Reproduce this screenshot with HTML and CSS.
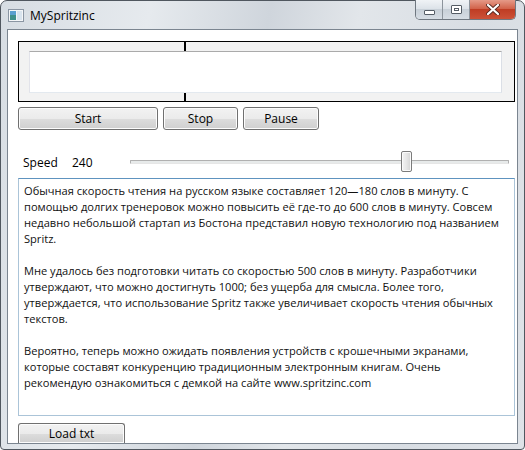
FILE: index.html
```html
<!DOCTYPE html>
<html lang="ru">
<head>
  <meta charset="UTF-8" />
  <title>MySpritzinc</title>
  <link rel="stylesheet" href="styles.css">
</head>
<body>
  <div class="window">
    <!-- Title bar -->
    <div class="titlebar">
      <svg class="app-icon" width="16" height="13" viewBox="0 0 16 13">
        <rect x="0.5" y="0.5" width="15" height="12" fill="#f4f6f8" stroke="#8b96a3"/>
        <rect x="2" y="2" width="6" height="9" fill="#3f8f8a"/>
        <rect x="2" y="2" width="6" height="4" fill="#5a9fd0"/>
        <rect x="9" y="2" width="5" height="9" fill="#d9e4ee"/>
      </svg>
      <span class="title">MySpritzinc</span>
      <div class="caption-buttons">
        <div class="cap-btn cap-min"><span class="min-glyph"></span></div>
        <div class="cap-btn cap-max"><span class="max-glyph"></span></div>
        <div class="cap-btn cap-close">
          <svg width="14" height="11" viewBox="0 0 14 11">
            <path d="M2 1 L12 10 M12 1 L2 10" stroke="#5a2a22" stroke-width="4" stroke-linecap="round"/>
            <path d="M2 1 L12 10 M12 1 L2 10" stroke="#ffffff" stroke-width="2.2" stroke-linecap="round"/>
          </svg>
        </div>
      </div>
    </div>

    <!-- Client area -->
    <div class="client">
      <div class="reader">
        <div class="word-box"></div>
        <span class="mark mark-top"></span>
        <span class="mark mark-bottom"></span>
      </div>

      <div class="controls">
        <button class="btn btn-start">Start</button>
        <button class="btn btn-stop">Stop</button>
        <button class="btn btn-pause">Pause</button>
      </div>

      <div class="speed-row">
        <span class="speed-label">Speed</span>
        <span class="speed-value">240</span>
        <div class="slider">
          <div class="track"></div>
          <div class="thumb" style="left: 71.6%"></div>
        </div>
      </div>

      <div class="text-box">Обычная скорость чтения на русском языке составляет 120—180 слов в минуту. С<br>помощью долгих тренеровок можно повысить её где-то до 600 слов в минуту. Совсем<br>недавно небольшой стартап из Бостона представил новую технологию под названием<br>Spritz.<br><br>Мне удалось без подготовки читать со скоростью 500 слов в минуту. Разработчики<br>утверждают, что можно достигнуть 1000; без ущерба для смысла. Более того,<br>утверждается, что использование Spritz также увеличивает скорость чтения обычных<br>текстов.<br><br>Вероятно, теперь можно ожидать появления устройств с крошечными экранами,<br>которые составят конкуренцию традиционным электронным книгам. Очень<br>рекомендую ознакомиться с демкой на сайте www.spritzinc.com</div>

      <button class="btn btn-load">Load txt</button>
    </div>
  </div>
</body>
</html>
```

FILE: styles.css
```css
* {
  box-sizing: border-box;
}

body {
  margin: 0;
  background-color: #ffffff;
  font-family: "Open Sans", "Noto Sans", sans-serif;
}

.window {
  width: 525px;
  height: 450px;
  border: 1px solid #50575f;
  border-radius: 7px 7px 4px 4px;
  background: linear-gradient(100deg, #d7dde3 0%, #e6eaee 25%, #cfd5dc 45%, #e2e6ea 60%, #d8dde3 80%, #dfe3e8 100%);
  padding: 0 6px;
}

.titlebar {
  height: 28px;
  display: flex;
  align-items: flex-start;
  position: relative;
}

.app-icon {
  margin: 8px 0 0 1px;
}

.title {
  margin: 6px 0 0 6px;
  font-size: 12px;
  color: #000;
}

.caption-buttons {
  position: absolute;
  top: -1px;
  right: 2px;
  display: flex;
  height: 20px;
  border: 1px solid #6f7780;
  border-top: none;
  border-radius: 0 0 5px 5px;
  overflow: hidden;
}

.cap-btn {
  height: 19px;
  display: flex;
  align-items: center;
  justify-content: center;
}

.cap-min,
.cap-max {
  width: 27px;
  background: linear-gradient(#f0f3f6, #dde3e9 45%, #c8d0d8 50%, #d6dde4);
  border-right: 1px solid #8c949c;
}

.cap-close {
  width: 45px;
  background: linear-gradient(#e59a88, #d2634b 45%, #bf3d24 50%, #cc5238);
}

.min-glyph {
  width: 11px;
  height: 5px;
  margin-top: 5px;
  border: 1px solid #555d66;
  background: #fff;
  border-radius: 1px;
}

.max-glyph {
  width: 11px;
  height: 9px;
  border: 1px solid #555d66;
  background: #fff;
  box-shadow: inset 0 0 0 2px #fff, inset 0 0 0 3px #555d66;
  border-radius: 1px;
}

.client {
  height: 415px;
  border: 1px solid #7b8590;
  background: #ffffff;
  padding: 11px 2px 0 10px;
}

.reader {
  position: relative;
  height: 61px;
  border: 1px solid #000;
  background: #f2f2f2;
  padding: 9px 12px 8px 10px;
}

.word-box {
  height: 42px;
  background: #fff;
  border: 1px solid #e3e9ef;
  border-top-color: #aaaaaa;
  border-left-color: #e2e3ea;
  border-right-color: #dbdfe6;
}

.mark {
  position: absolute;
  left: 165px;
  width: 2px;
  height: 9px;
  background: #000;
}

.mark-top {
  top: 0;
}

.mark-bottom {
  bottom: 0;
  height: 8px;
}

.controls {
  display: flex;
  gap: 5px;
  margin-top: 5px;
}

.btn {
  height: 23px;
  padding: 0;
  border: 1px solid #707070;
  border-radius: 3px;
  background: linear-gradient(#f2f2f2, #ebebeb 50%, #dddddd 51%, #cfcfcf);
  box-shadow: inset 0 0 0 1px #fcfcfc;
  font-family: "Open Sans", "Noto Sans", sans-serif;
  font-size: 12px;
  color: #000;
}

.btn-start {
  width: 140px;
}

.btn-stop {
  width: 75px;
}

.btn-pause {
  width: 76px;
}

.speed-row {
  display: flex;
  align-items: center;
  height: 22px;
  margin-top: 21px;
  font-size: 12px;
  color: #000;
}

.speed-label {
  margin-left: 5px;
  width: 49px;
}

.speed-value {
  width: 58px;
}

.slider {
  position: relative;
  flex: 1;
  height: 22px;
  margin-right: 6px;
}

.track {
  margin-top: 9px;
  height: 4px;
  border: 1px solid #b0b0b0;
  border-bottom-color: #e6e6e6;
  border-radius: 1px;
  background: #e7eaea;
}

.thumb {
  position: absolute;
  top: 0;
  width: 11px;
  height: 21px;
  border: 1px solid #7b7b7b;
  border-radius: 2px;
  background: linear-gradient(90deg, #f4f4f4, #e6e6e6 50%, #d4d4d4);
  box-shadow: inset 0 0 0 1px #fafafa;
}

.text-box {
  margin-top: 5px;
  height: 238px;
  border: 1px solid #abc4d8;
  border-top-color: #5e93bf;
  padding: 4px 5px;
  font-size: 11.1px;
  line-height: 16px;
  color: #111;
  white-space: nowrap;
  overflow: hidden;
}

.btn-load {
  margin-top: 7px;
  width: 107px;
  height: 20px;
  border-radius: 3px 3px 0 0;
  border-bottom: none;
}
```
